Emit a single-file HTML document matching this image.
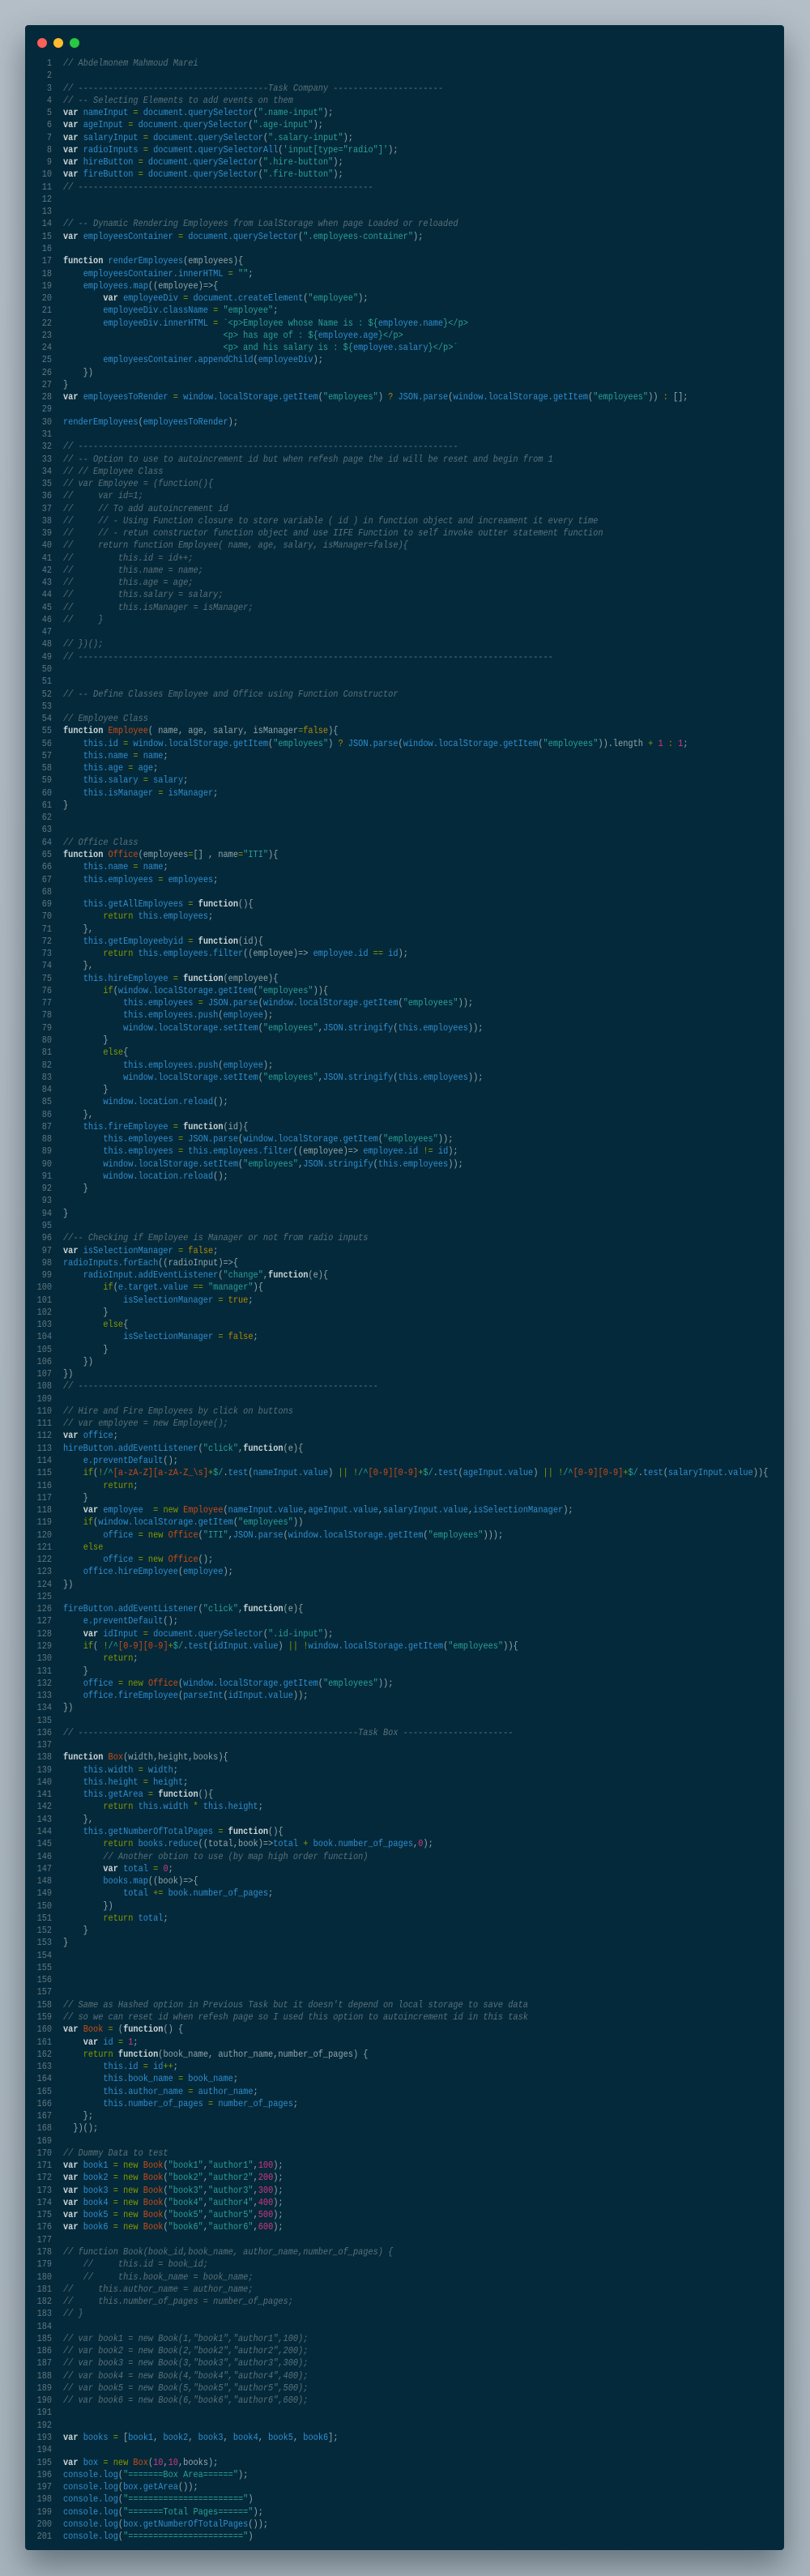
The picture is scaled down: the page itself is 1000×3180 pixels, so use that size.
<!DOCTYPE html>
<html><head><meta charset="utf-8">
<style>
html,body{margin:0;padding:0;}
body{width:1000px;height:3180px;background:linear-gradient(#b4bec6,#a8b4bd);position:relative;overflow:hidden;}
.win{position:absolute;left:31px;top:31px;width:937px;height:3117px;background:#04293a;border-radius:4px;box-shadow:0 18px 40px rgba(20,30,40,.45);}
.dot{position:absolute;top:47px;width:12px;height:12px;border-radius:50%;}
pre{margin:0;position:absolute;top:71px;font-family:"Liberation Mono",monospace;font-size:12px;line-height:15.27px;white-space:pre;}
.ln{left:0;width:64px;text-align:right;color:#5f7780;transform:scaleX(.85);transform-origin:right top;}
.code{left:78px;color:#93a6ab;transform:scaleX(.857);transform-origin:left top;}
b{color:#ccd6d9;font-weight:bold}
i{color:#5a717a;font-style:italic}
v{color:#2f8fd3}
t{color:#2aa198}
o{color:#859900}
n{color:#d33682}
r{color:#cb4b16}
y{color:#b58900}
g{color:#859900}
</style></head><body>
<div class="win"></div>
<div class="dot" style="left:46px;background:#fe5f57"></div>
<div class="dot" style="left:66px;background:#febc2e"></div>
<div class="dot" style="left:86px;background:#28c840"></div>
<pre class="ln">1
2
3
4
5
6
7
8
9
10
11
12
13
14
15
16
17
18
19
20
21
22
23
24
25
26
27
28
29
30
31
32
33
34
35
36
37
38
39
40
41
42
43
44
45
46
47
48
49
50
51
52
53
54
55
56
57
58
59
60
61
62
63
64
65
66
67
68
69
70
71
72
73
74
75
76
77
78
79
80
81
82
83
84
85
86
87
88
89
90
91
92
93
94
95
96
97
98
99
100
101
102
103
104
105
106
107
108
109
110
111
112
113
114
115
116
117
118
119
120
121
122
123
124
125
126
127
128
129
130
131
132
133
134
135
136
137
138
139
140
141
142
143
144
145
146
147
148
149
150
151
152
153
154
155
156
157
158
159
160
161
162
163
164
165
166
167
168
169
170
171
172
173
174
175
176
177
178
179
180
181
182
183
184
185
186
187
188
189
190
191
192
193
194
195
196
197
198
199
200
201</pre>
<pre class="code"><i>// Abdelmonem Mahmoud Marei</i>

<i>// --------------------------------------Task Company ----------------------</i>
<i>// -- Selecting Elements to add events on them</i>
<b>var</b> <v>nameInput</v> <o>=</o> <v>document.querySelector</v>(<t>".name-input"</t>);
<b>var</b> <v>ageInput</v> <o>=</o> <v>document.querySelector</v>(<t>".age-input"</t>);
<b>var</b> <v>salaryInput</v> <o>=</o> <v>document.querySelector</v>(<t>".salary-input"</t>);
<b>var</b> <v>radioInputs</v> <o>=</o> <v>document.querySelectorAll</v>(<t>'input[type="radio"]'</t>);
<b>var</b> <v>hireButton</v> <o>=</o> <v>document.querySelector</v>(<t>".hire-button"</t>);
<b>var</b> <v>fireButton</v> <o>=</o> <v>document.querySelector</v>(<t>".fire-button"</t>);
<i>// -----------------------------------------------------------</i>


<i>// -- Dynamic Rendering Employees from LoalStorage when page Loaded or reloaded</i>
<b>var</b> <v>employeesContainer</v> <o>=</o> <v>document.querySelector</v>(<t>".employees-container"</t>);

<b>function</b> <v>renderEmployees</v>(employees){
    <v>employeesContainer.innerHTML</v> <o>=</o> <t>""</t>;
    <v>employees.map</v>((employee)=&gt;{
        <b>var</b> <v>employeeDiv</v> <o>=</o> <v>document.createElement</v>(<t>"employee"</t>);
        <v>employeeDiv.className</v> <o>=</o> <t>"employee"</t>;
        <v>employeeDiv.innerHTML</v> <o>=</o> <t>`&lt;p&gt;Employee whose Name is : ${</t><v>employee.name</v><t>}&lt;/p&gt;</t>
<t>                                &lt;p&gt; has age of : ${</t><v>employee.age</v><t>}&lt;/p&gt;</t>
<t>                                &lt;p&gt; and his salary is : ${</t><v>employee.salary</v><t>}&lt;/p&gt;`</t>
        <v>employeesContainer.appendChild</v>(<v>employeeDiv</v>);
    })
}
<b>var</b> <v>employeesToRender</v> <o>=</o> <v>window.localStorage.getItem</v>(<t>"employees"</t>) <y>?</y> <v>JSON.parse</v>(<v>window.localStorage.getItem</v>(<t>"employees"</t>)) <y>:</y> [];

<v>renderEmployees</v>(<v>employeesToRender</v>);

<i>// ----------------------------------------------------------------------------</i>
<i>// -- Option to use to autoincrement id but when refesh page the id will be reset and begin from 1</i>
<i>// // Employee Class</i>
<i>// var Employee = (function(){</i>
<i>//     var id=1;</i>
<i>//     // To add autoincrement id</i>
<i>//     // - Using Function closure to store variable ( id ) in function object and increament it every time</i>
<i>//     // - retun constructor function object and use IIFE Function to self invoke outter statement function</i>
<i>//     return function Employee( name, age, salary, isManager=false){</i>
<i>//         this.id = id++;</i>
<i>//         this.name = name;</i>
<i>//         this.age = age;</i>
<i>//         this.salary = salary;</i>
<i>//         this.isManager = isManager;</i>
<i>//     }</i>

<i>// })();</i>
<i>// -----------------------------------------------------------------------------------------------</i>


<i>// -- Define Classes Employee and Office using Function Constructor</i>

<i>// Employee Class</i>
<b>function</b> <r>Employee</r>( name, age, salary, isManager<o>=</o><y>false</y>){
    <v>this.id</v> <o>=</o> <v>window.localStorage.getItem</v>(<t>"employees"</t>) <y>?</y> <v>JSON.parse</v>(<v>window.localStorage.getItem</v>(<t>"employees"</t>)).length <o>+</o> <n>1</n> <y>:</y> <n>1</n>;
    <v>this.name</v> <o>=</o> <v>name</v>;
    <v>this.age</v> <o>=</o> <v>age</v>;
    <v>this.salary</v> <o>=</o> <v>salary</v>;
    <v>this.isManager</v> <o>=</o> <v>isManager</v>;
}


<i>// Office Class</i>
<b>function</b> <r>Office</r>(employees<o>=</o>[] , name<o>=</o><t>"ITI"</t>){
    <v>this.name</v> <o>=</o> <v>name</v>;
    <v>this.employees</v> <o>=</o> <v>employees</v>;

    <v>this.getAllEmployees</v> <o>=</o> <b>function</b>(){
        <g>return</g> <v>this.employees</v>;
    },
    <v>this.getEmployeebyid</v> <o>=</o> <b>function</b>(id){
        <g>return</g> <v>this.employees.filter</v>((employee)=&gt; <v>employee.id</v> <o>==</o> <v>id</v>);
    },
    <v>this.hireEmployee</v> <o>=</o> <b>function</b>(employee){
        <g>if</g>(<v>window.localStorage.getItem</v>(<t>"employees"</t>)){
            <v>this.employees</v> <o>=</o> <v>JSON.parse</v>(<v>window.localStorage.getItem</v>(<t>"employees"</t>));
            <v>this.employees.push</v>(<v>employee</v>);
            <v>window.localStorage.setItem</v>(<t>"employees"</t>,<v>JSON.stringify</v>(<v>this.employees</v>));
        }
        <g>else</g>{
            <v>this.employees.push</v>(<v>employee</v>);
            <v>window.localStorage.setItem</v>(<t>"employees"</t>,<v>JSON.stringify</v>(<v>this.employees</v>));
        }
        <v>window.location.reload</v>();
    },
    <v>this.fireEmployee</v> <o>=</o> <b>function</b>(id){
        <v>this.employees</v> <o>=</o> <v>JSON.parse</v>(<v>window.localStorage.getItem</v>(<t>"employees"</t>));
        <v>this.employees</v> <o>=</o> <v>this.employees.filter</v>((employee)=&gt; <v>employee.id</v> <o>!=</o> <v>id</v>);
        <v>window.localStorage.setItem</v>(<t>"employees"</t>,<v>JSON.stringify</v>(<v>this.employees</v>));
        <v>window.location.reload</v>();
    }

}

<i>//-- Checking if Employee is Manager or not from radio inputs</i>
<b>var</b> <v>isSelectionManager</v> <o>=</o> <y>false</y>;
<v>radioInputs.forEach</v>((radioInput)=&gt;{
    <v>radioInput.addEventListener</v>(<t>"change"</t>,<b>function</b>(e){
        <g>if</g>(<v>e.target.value</v> <o>==</o> <t>"manager"</t>){
            <v>isSelectionManager</v> <o>=</o> <y>true</y>;
        }
        <g>else</g>{
            <v>isSelectionManager</v> <o>=</o> <y>false</y>;
        }
    })
})
<i>// ------------------------------------------------------------</i>

<i>// Hire and Fire Employees by click on buttons</i>
<i>// var employee = new Employee();</i>
<b>var</b> <v>office</v>;
<v>hireButton.addEventListener</v>(<t>"click"</t>,<b>function</b>(e){
    <v>e.preventDefault</v>();
    <g>if</g>(<o>!</o><t>/^</t><r>[a-zA-Z][a-zA-Z_\s]</r><o>+</o><t>$/</t>.<v>test</v>(<v>nameInput.value</v>) <o>||</o> <o>!</o><t>/^</t><r>[0-9][0-9]</r><o>+</o><t>$/</t>.<v>test</v>(<v>ageInput.value</v>) <o>||</o> <o>!</o><t>/^</t><r>[0-9][0-9]</r><o>+</o><t>$/</t>.<v>test</v>(<v>salaryInput.value</v>)){
        <g>return</g>;
    }
    <b>var</b> <v>employee</v>  <o>=</o> <g>new</g> <r>Employee</r>(<v>nameInput.value</v>,<v>ageInput.value</v>,<v>salaryInput.value</v>,<v>isSelectionManager</v>);
    <g>if</g>(<v>window.localStorage.getItem</v>(<t>"employees"</t>))
        <v>office</v> <o>=</o> <g>new</g> <r>Office</r>(<t>"ITI"</t>,<v>JSON.parse</v>(<v>window.localStorage.getItem</v>(<t>"employees"</t>)));
    <g>else</g>
        <v>office</v> <o>=</o> <g>new</g> <r>Office</r>();
    <v>office.hireEmployee</v>(<v>employee</v>);
})

<v>fireButton.addEventListener</v>(<t>"click"</t>,<b>function</b>(e){
    <v>e.preventDefault</v>();
    <b>var</b> <v>idInput</v> <o>=</o> <v>document.querySelector</v>(<t>".id-input"</t>);
    <g>if</g>( <o>!</o><t>/^</t><r>[0-9][0-9]</r><o>+</o><t>$/</t>.<v>test</v>(<v>idInput.value</v>) <o>||</o> <o>!</o><v>window.localStorage.getItem</v>(<t>"employees"</t>)){
        <g>return</g>;
    }
    <v>office</v> <o>=</o> <g>new</g> <r>Office</r>(<v>window.localStorage.getItem</v>(<t>"employees"</t>));
    <v>office.fireEmployee</v>(<v>parseInt</v>(<v>idInput.value</v>));
})

<i>// --------------------------------------------------------Task Box ----------------------</i>

<b>function</b> <r>Box</r>(width,height,books){
    <v>this.width</v> <o>=</o> <v>width</v>;
    <v>this.height</v> <o>=</o> <v>height</v>;
    <v>this.getArea</v> <o>=</o> <b>function</b>(){
        <g>return</g> <v>this.width</v> <o>*</o> <v>this.height</v>;
    },
    <v>this.getNumberOfTotalPages</v> <o>=</o> <b>function</b>(){
        <g>return</g> <v>books.reduce</v>((total,book)=&gt;<v>total</v> <o>+</o> <v>book.number_of_pages</v>,<n>0</n>);
        <i>// Another obtion to use (by map high order function)</i>
        <b>var</b> <v>total</v> <o>=</o> <n>0</n>;
        <v>books.map</v>((book)=&gt;{
            <v>total</v> <o>+=</o> <v>book.number_of_pages</v>;
        })
        <g>return</g> <v>total</v>;
    }
}




<i>// Same as Hashed option in Previous Task but it doesn't depend on local storage to save data</i>
<i>// so we can reset id when refesh page so I used this option to autoincrement id in this task</i>
<b>var</b> <r>Book</r> <o>=</o> (<b>function</b>() {
    <b>var</b> <v>id</v> <o>=</o> <n>1</n>;
    <g>return</g> <b>function</b>(book_name, author_name,number_of_pages) {
        <v>this.id</v> <o>=</o> <v>id</v><o>++</o>;
        <v>this.book_name</v> <o>=</o> <v>book_name</v>;
        <v>this.author_name</v> <o>=</o> <v>author_name</v>;
        <v>this.number_of_pages</v> <o>=</o> <v>number_of_pages</v>;
    };
  })();

<i>// Dummy Data to test</i>
<b>var</b> <v>book1</v> <o>=</o> <g>new</g> <r>Book</r>(<t>"book1"</t>,<t>"author1"</t>,<n>100</n>);
<b>var</b> <v>book2</v> <o>=</o> <g>new</g> <r>Book</r>(<t>"book2"</t>,<t>"author2"</t>,<n>200</n>);
<b>var</b> <v>book3</v> <o>=</o> <g>new</g> <r>Book</r>(<t>"book3"</t>,<t>"author3"</t>,<n>300</n>);
<b>var</b> <v>book4</v> <o>=</o> <g>new</g> <r>Book</r>(<t>"book4"</t>,<t>"author4"</t>,<n>400</n>);
<b>var</b> <v>book5</v> <o>=</o> <g>new</g> <r>Book</r>(<t>"book5"</t>,<t>"author5"</t>,<n>500</n>);
<b>var</b> <v>book6</v> <o>=</o> <g>new</g> <r>Book</r>(<t>"book6"</t>,<t>"author6"</t>,<n>600</n>);

<i>// function Book(book_id,book_name, author_name,number_of_pages) {</i>
    <i>//     this.id = book_id;</i>
    <i>//     this.book_name = book_name;</i>
<i>//     this.author_name = author_name;</i>
<i>//     this.number_of_pages = number_of_pages;</i>
<i>// }</i>

<i>// var book1 = new Book(1,"book1","author1",100);</i>
<i>// var book2 = new Book(2,"book2","author2",200);</i>
<i>// var book3 = new Book(3,"book3","author3",300);</i>
<i>// var book4 = new Book(4,"book4","author4",400);</i>
<i>// var book5 = new Book(5,"book5","author5",500);</i>
<i>// var book6 = new Book(6,"book6","author6",600);</i>


<b>var</b> <v>books</v> <o>=</o> [<v>book1</v>, <v>book2</v>, <v>book3</v>, <v>book4</v>, <v>book5</v>, <v>book6</v>];

<b>var</b> <v>box</v> <o>=</o> <g>new</g> <r>Box</r>(<n>10</n>,<n>10</n>,books);
<v>console.log</v>(<t>"=======Box Area======"</t>);
<v>console.log</v>(<v>box.getArea</v>());
<v>console.log</v>(<t>"======================="</t>)
<v>console.log</v>(<t>"=======Total Pages======"</t>);
<v>console.log</v>(<v>box.getNumberOfTotalPages</v>());
<v>console.log</v>(<t>"======================="</t>)</pre>
</body></html>
